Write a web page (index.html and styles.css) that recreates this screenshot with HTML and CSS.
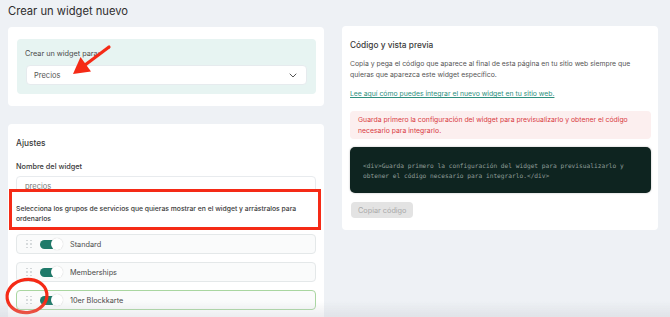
FILE: index.html
```html
<!DOCTYPE html>
<html lang="es">
<head>
<meta charset="utf-8">
<title>Crear un widget nuevo</title>
<link rel="stylesheet" href="styles.css">
</head>
<body>
  <h1 class="page-title">Crear un widget nuevo</h1>
  <div class="layout">
    <div class="col-left">
      <section class="card card-target">
        <div class="target-box">
          <div class="target-label">Crear un widget para:</div>
          <div class="select">
            <span>Precios</span>
            <svg class="chevron" width="8" height="5" viewBox="0 0 8 5"><path d="M1 1l3 3 3-3" fill="none" stroke="#555" stroke-width="1" stroke-linecap="round" stroke-linejoin="round"/></svg>
          </div>
        </div>
        <svg class="annot-arrow" width="120" height="90" viewBox="0 0 120 90">
          <line x1="109" y1="47" x2="85" y2="65" stroke="#f52a16" stroke-width="3.2" stroke-linecap="round"/>
          <polygon points="73,74 80.5,57 91,71.5" fill="#f52a16"/>
        </svg>
      </section>
      <section class="card card-settings">
        <h2 class="card-title">Ajustes</h2>
        <div class="field-label">Nombre del widget</div>
        <div class="input">precios</div>
        <div class="groups-label">Selecciona los grupos de servicios que quieras mostrar en el widget y arrástralos para ordenarlos</div>
        <ul class="group-list">
          <li class="group-row">
            <span class="drag"><i></i><i></i><i></i><i></i><i></i><i></i></span>
            <span class="toggle"><span class="knob"></span></span>
            <span class="group-name">Standard</span>
          </li>
          <li class="group-row">
            <span class="drag"><i></i><i></i><i></i><i></i><i></i><i></i></span>
            <span class="toggle"><span class="knob"></span></span>
            <span class="group-name">Memberships</span>
          </li>
          <li class="group-row is-active">
            <span class="drag"><i></i><i></i><i></i><i></i><i></i><i></i></span>
            <span class="toggle"><span class="knob"></span></span>
            <span class="group-name">10er Blockkarte</span>
          </li>
        </ul>
        <svg class="annot-circle" width="50" height="42" viewBox="0 0 50 42">
          <ellipse cx="25" cy="20" rx="20" ry="16.5" fill="none" stroke="#f52a16" stroke-width="3.2" transform="rotate(-8 25 20)"/>
        </svg>
      </section>
    </div>
    <section class="card card-code">
      <h2 class="card-title">Código y vista previa</h2>
      <p class="text">Copia y pega el código que aparece al final de esta página en tu sitio web siempre que quieras que aparezca este widget específico.</p>
      <a class="link" href="#">Lee aquí cómo puedes integrar el nuevo widget en tu sitio web.</a>
      <div class="alert">Guarda primero la configuración del widget para previsualizarlo y obtener el código necesario para integrarlo.</div>
      <pre class="code">&lt;div&gt;Guarda primero la configuración del widget para previsualizarlo y obtener el código necesario para integrarlo.&lt;/div&gt;</pre>
      <button class="btn-copy" disabled>Copiar código</button>
    </section>
  </div>
</body>
</html>
```
FILE: styles.css
```css
html, body {
  height: 100%;
  overflow: hidden;
}
body {
  margin: 0;
  padding: 0 12px 0 8px;
  background: #eef1f5;
  font-family: Inter, "Noto Sans", sans-serif;
  color: #444;
  box-sizing: border-box;
}
body::after {
  content: "";
  position: fixed;
  left: 0;
  right: 0;
  bottom: 0;
  height: 16px;
  background: linear-gradient(to bottom, rgba(200, 204, 210, 0), rgba(200, 204, 210, 0.35));
  pointer-events: none;
}
.page-title {
  margin: 0;
  padding-top: 4px;
  height: 22px;
  font-size: 11.2px;
  line-height: 15px;
  font-weight: 400;
  color: #2e2e2e;
}
.layout {
  display: grid;
  grid-template-columns: 1fr 1fr;
  gap: 18px;
  align-items: start;
}
.col-left {
  display: flex;
  flex-direction: column;
  gap: 18px;
  padding-top: 1px;
}
.card {
  background: #fff;
  border-radius: 4px;
  position: relative;
}
.card-target {
  padding: 12px 8px 12px 9px;
}
.target-box {
  background: #e7f4f2;
  border-radius: 4px;
  padding: 10px 9px 9px 8px;
}
.target-label {
  font-size: 7.3px;
  line-height: 10px;
  color: #4a4a4a;
  margin-bottom: 6px;
}
.select {
  height: 20px;
  box-sizing: border-box;
  margin-left: 1px;
  background: #fff;
  border: 1px solid #e6ebee;
  border-radius: 4px;
  padding: 0 9px 0 7px;
  display: flex;
  align-items: center;
  justify-content: space-between;
  font-size: 7.5px;
  color: #555;
}
.annot-arrow {
  position: absolute;
  left: -8px;
  top: -27px;
  pointer-events: none;
}
.card-settings {
  padding: 13px 8px 30px 8px;
  border-radius: 4px 4px 0 0;
}
.card-title {
  margin: 0;
  font-size: 8.3px;
  line-height: 12px;
  font-weight: 500;
  color: #3a3a3a;
}
.field-label {
  margin-top: 13px;
  font-size: 7.3px;
  line-height: 10px;
  font-weight: 500;
  color: #3a3a3a;
}
.input {
  margin-top: 4px;
  height: 20px;
  box-sizing: border-box;
  border: 1px solid #e8ebee;
  border-radius: 4px;
  padding: 0 8px;
  display: flex;
  align-items: center;
  font-size: 7.5px;
  color: #777;
}
.groups-label {
  position: relative;
  margin: -7px -5px 0 -7px;
  background: #fff;
  border: 3px solid #f52a16;
  padding: 12px 4px 3px 4px;
  font-size: 6.8px;
  line-height: 10px;
  font-weight: 500;
  color: #3a3a3a;
}
.group-list {
  list-style: none;
  margin: 4px 0 0;
  padding: 0;
  display: flex;
  flex-direction: column;
  gap: 8px;
}
.group-row {
  height: 20px;
  box-sizing: border-box;
  border: 1px solid #e4e8e9;
  border-radius: 4px;
  background: #fafbfb;
  display: flex;
  align-items: center;
  padding-left: 9px;
}
.group-row.is-active {
  border-color: #a9d6a0;
}
.drag {
  display: grid;
  grid-template-columns: 2px 2px;
  grid-auto-rows: 2px;
  column-gap: 2px;
  row-gap: 1.5px;
  width: 6px;
}
.drag i {
  display: block;
  width: 1.8px;
  height: 1.8px;
  border-radius: 50%;
  background: #cdd2d4;
}
.toggle {
  position: relative;
  margin-left: 8px;
  width: 21px;
  height: 9px;
  border-radius: 5px;
  background: #1f7a6a;
}
.knob {
  position: absolute;
  right: -2px;
  top: -1.5px;
  width: 12px;
  height: 12px;
  border-radius: 50%;
  background: #fff;
  box-shadow: 0 0 1px rgba(0, 0, 0, 0.25);
}
.group-name {
  margin-left: 9px;
  font-size: 7.3px;
  color: #4a4a4a;
}
.annot-circle {
  position: absolute;
  left: -6px;
  top: 152px;
  pointer-events: none;
}
.card-code {
  padding: 13px 8px 12px 8px;
}
.text {
  margin: 7px 0 0;
  font-size: 6.85px;
  line-height: 11px;
  color: #555;
}
.link {
  display: block;
  margin-top: 8px;
  font-size: 6.85px;
  line-height: 11px;
  color: #2e8f7e;
  text-decoration: underline;
}
.alert {
  margin-top: 12px;
  margin-right: -1px;
  background: #fcefef;
  border-radius: 4px;
  padding: 3px 8px;
  font-size: 6.85px;
  line-height: 11px;
  color: #d93b3f;
}
.code {
  margin: 8px -1px 0 0;
  background: #0e2420;
  border-radius: 5px;
  padding: 14px 16px 12px 13px;
  font-family: "DejaVu Sans Mono", "Liberation Mono", monospace;
  font-size: 6.2px;
  line-height: 10px;
  color: #8e9c98;
  white-space: pre-wrap;
  box-shadow: 0 0 2px rgba(0, 0, 0, 0.3);
}
.btn-copy {
  display: block;
  margin-top: 9px;
  margin-left: 1px;
  height: 16px;
  padding: 0 7px;
  border: none;
  border-radius: 4px;
  background: #e3e3e3;
  color: #a9a9a9;
  font-family: Inter, "Noto Sans", sans-serif;
  font-size: 7.3px;
}
```
